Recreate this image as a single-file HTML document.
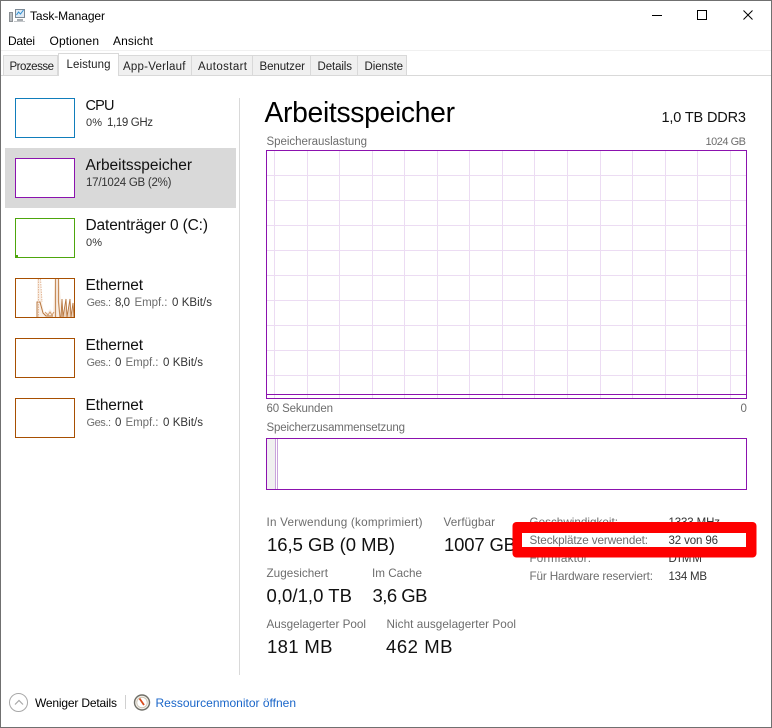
<!DOCTYPE html>
<html lang="de">
<head>
<meta charset="utf-8">
<title>Task-Manager</title>
<style>
html,body{margin:0;padding:0;background:#fff;width:772px;height:728px;overflow:hidden}
svg{display:block}
text{font-family:"Liberation Sans",Arial,sans-serif;font-size:12px;fill:#000;white-space:pre}
.t{font-size:11.5px;fill:#222}
.g{font-size:11.7px;fill:#6d6d6d}
.d{font-size:11.5px;fill:#333}
.l{font-size:11.5px;fill:#6d6d6d}
.h{font-size:15.5px;fill:#111}
.v{font-size:18.5px;fill:#111}
.c{shape-rendering:crispEdges}
</style>
</head>
<body>
<svg width="772" height="728" viewBox="0 0 772 728" xmlns="http://www.w3.org/2000/svg">
<rect width="772" height="728" fill="#fff"/>

<!-- Window frame -->
<g class="c" fill="#707070">
<rect x="0" y="0" width="772" height="1"/>
<rect x="0" y="0" width="1" height="728"/>
<rect x="771" y="0" width="1" height="728"/>
<rect x="0" y="727" width="772" height="1"/>
</g>

<!-- Title bar -->
<g>
<rect x="15.5" y="9.5" width="9" height="8" fill="#dfeaf5" stroke="#7d8a96"/>
<path d="M16.5 15l2-3 2 2 3-4" fill="none" stroke="#2f8fd0" stroke-width="1"/>
<rect x="9.5" y="12.5" width="3" height="9" fill="#b8bcc0" stroke="#8a8f93"/>
<rect x="17" y="19" width="6" height="2" fill="#a8adb1"/>
<rect x="14" y="21" width="11" height="1" fill="#c4c7ca"/>
</g>
<text x="30" y="20" textLength="75">Task-Manager</text>
<g class="c">
<rect x="652" y="15" width="10" height="1" fill="#000"/>
<rect x="697.5" y="10.5" width="9" height="9" fill="none" stroke="#000"/>
</g>
<path d="M743.5 10.5l9 9M752.5 10.5l-9 9" stroke="#000" fill="none" stroke-width="1"/>

<!-- Menu -->
<text x="8" y="45" textLength="27">Datei</text>
<text x="49.5" y="45" textLength="49.5">Optionen</text>
<text x="113" y="45" textLength="40">Ansicht</text>
<rect class="c" x="1" y="50" width="770" height="1" fill="#f0f0f0"/>

<!-- Tabs -->
<g class="c">
<rect x="3.5" y="55.5" width="54" height="20" fill="#f0f0f0" stroke="#d9d9d9"/>
<rect x="118.5" y="55.5" width="73" height="20" fill="#f0f0f0" stroke="#d9d9d9"/>
<rect x="191.5" y="55.5" width="61" height="20" fill="#f0f0f0" stroke="#d9d9d9"/>
<rect x="252.5" y="55.5" width="58" height="20" fill="#f0f0f0" stroke="#d9d9d9"/>
<rect x="310.5" y="55.5" width="47" height="20" fill="#f0f0f0" stroke="#d9d9d9"/>
<rect x="357.5" y="55.5" width="49" height="20" fill="#f0f0f0" stroke="#d9d9d9"/>
<rect x="1" y="75" width="770" height="1" fill="#d9d9d9"/>
<path d="M58.5 76V53.5H118.5V76" fill="#fff" stroke="#d9d9d9"/>
<rect x="59" y="75" width="59" height="1" fill="#fff"/>
</g>
<text class="t" x="9.5" y="70" textLength="44.5">Prozesse</text>
<text class="t" x="66.5" y="68" textLength="44">Leistung</text>
<text class="t" x="123" y="70" textLength="62.5">App-Verlauf</text>
<text class="t" x="198" y="70" textLength="49">Autostart</text>
<text class="t" x="259.5" y="70" textLength="45.5">Benutzer</text>
<text class="t" x="317.5" y="70" textLength="34.5">Details</text>
<text class="t" x="364.5" y="70" textLength="38.5">Dienste</text>

<!-- Sidebar -->
<rect class="c" x="5" y="148" width="231" height="60" fill="#d9d9d9"/>
<rect class="c" x="239" y="98" width="1" height="577" fill="#d9d9d9"/>

<g class="c" fill="#fff" stroke-width="1">
<rect x="15.5" y="98.5" width="59" height="39" stroke="#117dbb"/>
<rect x="15.5" y="158.5" width="59" height="39" stroke="#8b12ae"/>
<rect x="15.5" y="218.5" width="59" height="39" stroke="#4da60c"/>
<rect x="15.5" y="278.5" width="59" height="39" stroke="#a74f01"/>
<rect x="15.5" y="338.5" width="59" height="39" stroke="#a74f01"/>
<rect x="15.5" y="398.5" width="59" height="39" stroke="#a74f01"/>
</g>
<rect class="c" x="16" y="255" width="2" height="2" fill="#4da60c"/>

<!-- Ethernet mini graph -->
<g>
<path d="M37 317V279H40L42 302L44 313L47 313L50 309L53 313L55 279H59L61 300L62 317Z" fill="#f8ebe0" opacity=".8"/>
<path d="M37 317V302H40L43 313L46 316H53" fill="none" stroke="#b8773f" stroke-width="1"/>
<path d="M38.5 279V317M40.5 279L42 302" fill="none" stroke="#e3b797" stroke-width="1" stroke-dasharray="1.5 1"/>
<path d="M45 312L48 315L50 312L52 315L54 312" fill="none" stroke="#d29c6e" stroke-width="1"/>
<path d="M55.5 279V317M58.5 279V302L60 317" fill="none" stroke="#c68c5a" stroke-width="1.2"/>
<path d="M61 317L62 299L63 317L66 299L67 317L70 299L71 317L73 303L74 317" fill="#ecd3bd" stroke="#b8773f" stroke-width=".9"/>
<rect class="c" x="15" y="317" width="60" height="1" fill="#a74f01"/>
<rect class="c" x="74" y="278" width="1" height="40" fill="#a74f01"/>
</g>

<text class="h" x="85.5" y="110" textLength="29" style="font-size:14.5px">CPU</text>
<text class="d" x="86" y="126" textLength="16" style="font-size:11px">0%</text>
<text class="d" x="107" y="126" textLength="46">1,19 GHz</text>

<text class="h" x="85.5" y="170" textLength="106.5">Arbeitsspeicher</text>
<text class="d" x="86" y="186" textLength="85.5">17/1024 GB (2%)</text>

<text class="h" x="85.5" y="230" textLength="122.5">Datenträger 0 (C:)</text>
<text class="d" x="86" y="246" textLength="16" style="font-size:11px">0%</text>

<text class="h" x="85.5" y="290" textLength="57.5">Ethernet</text>
<text class="g" x="86.5" y="306" textLength="24.5" style="font-size:11px">Ges.:</text>
<text class="d" x="115" y="306" textLength="15">8,0</text>
<text class="g" x="134.5" y="306" textLength="33" style="font-size:11.5px">Empf.:</text>
<text class="d" x="172" y="306" textLength="40">0 KBit/s</text>

<text class="h" x="85.5" y="350" textLength="57.5">Ethernet</text>
<text class="g" x="86.5" y="366" textLength="24.5" style="font-size:11px">Ges.:</text>
<text class="d" x="115" y="366" textLength="6">0</text>
<text class="g" x="125.5" y="366" textLength="33" style="font-size:11.5px">Empf.:</text>
<text class="d" x="163" y="366" textLength="40">0 KBit/s</text>

<text class="h" x="85.5" y="410" textLength="57.5">Ethernet</text>
<text class="g" x="86.5" y="426" textLength="24.5" style="font-size:11px">Ges.:</text>
<text class="d" x="115" y="426" textLength="6">0</text>
<text class="g" x="125.5" y="426" textLength="33" style="font-size:11.5px">Empf.:</text>
<text class="d" x="163" y="426" textLength="40">0 KBit/s</text>

<!-- Header -->
<text x="264.5" y="122" style="font-size:28.3px" textLength="190.5">Arbeitsspeicher</text>
<text class="h" x="661.5" y="122" textLength="84.5" style="font-size:14.5px">1,0 TB DDR3</text>
<text class="l" x="266.5" y="145" textLength="100.5">Speicherauslastung</text>
<text class="l" x="705.5" y="145" textLength="40.5" style="font-size:11px">1024 GB</text>

<!-- Main graph -->
<g class="c">
<g fill="#ecdcf3">
<rect x="274" y="151" width="1" height="247"/><rect x="307" y="151" width="1" height="247"/>
<rect x="339" y="151" width="1" height="247"/><rect x="372" y="151" width="1" height="247"/>
<rect x="404" y="151" width="1" height="247"/><rect x="437" y="151" width="1" height="247"/>
<rect x="469" y="151" width="1" height="247"/><rect x="502" y="151" width="1" height="247"/>
<rect x="534" y="151" width="1" height="247"/><rect x="567" y="151" width="1" height="247"/>
<rect x="600" y="151" width="1" height="247"/><rect x="632" y="151" width="1" height="247"/>
<rect x="665" y="151" width="1" height="247"/><rect x="697" y="151" width="1" height="247"/>
<rect x="730" y="151" width="1" height="247"/>
<rect x="267" y="175" width="479" height="1"/><rect x="267" y="200" width="479" height="1"/>
<rect x="267" y="225" width="479" height="1"/><rect x="267" y="250" width="479" height="1"/>
<rect x="267" y="275" width="479" height="1"/><rect x="267" y="300" width="479" height="1"/>
<rect x="267" y="325" width="479" height="1"/><rect x="267" y="350" width="479" height="1"/>
<rect x="267" y="375" width="479" height="1"/>
</g>
<rect x="267" y="394" width="479" height="1" fill="#8b12ae"/>
<rect x="266.5" y="150.5" width="480" height="248" fill="none" stroke="#8b12ae"/>
</g>
<text class="l" x="266.5" y="412" textLength="66.5">60 Sekunden</text>
<text class="l" x="740.5" y="412" textLength="5.5">0</text>
<text class="l" x="266.5" y="431" textLength="138.5">Speicherzusammensetzung</text>

<!-- Composition -->
<g class="c">
<rect x="267" y="439" width="8" height="50" fill="#f0f0f0"/>
<rect x="275" y="439" width="1" height="50" fill="#c9a3dc"/>
<rect x="277" y="439" width="1" height="50" fill="#c9a3dc"/>
<rect x="266.5" y="438.5" width="480" height="51" fill="none" stroke="#8b12ae"/>
</g>

<!-- Stats -->
<text class="g" x="266.5" y="526" textLength="156">In Verwendung (komprimiert)</text>
<text class="g" x="443.5" y="526" textLength="51.5">Verfügbar</text>
<text class="v" x="267" y="551" textLength="128">16,5 GB (0 MB)</text>
<text class="v" x="444" y="551" textLength="72">1007 GB</text>
<text class="g" x="266.5" y="577" textLength="61.5">Zugesichert</text>
<text class="g" x="372" y="577" textLength="50">Im Cache</text>
<text class="v" x="266.5" y="602" textLength="85.5">0,0/1,0 TB</text>
<text class="v" x="372.5" y="602" textLength="55">3,6 GB</text>
<text class="g" x="266.5" y="628" textLength="99.5">Ausgelagerter Pool</text>
<text class="g" x="386.5" y="628" textLength="129.5">Nicht ausgelagerter Pool</text>
<text class="v" x="267" y="653" textLength="65.5">181 MB</text>
<text class="v" x="386" y="653" textLength="66.5">462 MB</text>

<text class="g" x="529.5" y="526" textLength="88.5">Geschwindigkeit:</text>
<text x="668.5" y="526" textLength="51.5" class="d">1333 MHz</text>
<text class="g" x="529.5" y="562" textLength="61.5">Formfaktor:</text>
<text x="668.5" y="562" textLength="33.5" class="d">DIMM</text>
<text class="g" x="529.5" y="580" textLength="123.5">Für Hardware reserviert:</text>
<text x="668.5" y="580" textLength="38.5" class="d">134 MB</text>

<!-- Red annotation -->
<rect x="512.5" y="522" width="244" height="35.5" rx="4" ry="4" fill="#fe0000"/>
<rect class="c" x="522" y="533" width="224" height="14" fill="#fff"/>
<text class="g" x="529.5" y="544" textLength="118.5">Steckplätze verwendet:</text>
<text x="668.5" y="544" textLength="49.5" class="d">32 von 96</text>

<!-- Footer -->
<circle cx="18.5" cy="702.5" r="9" fill="#fff" stroke="#a8a8a8" stroke-width="1"/>
<path d="M15 704.5l4-4 4 4" fill="none" stroke="#a8a8a8" stroke-width="1.2"/>
<text x="35" y="707" textLength="82">Weniger Details</text>
<rect class="c" x="125" y="695" width="1" height="14" fill="#d0d0d0"/>
<circle cx="142" cy="702.5" r="7.5" fill="#f3efe8" stroke="#6f6f68" stroke-width="1.4"/>
<circle cx="142" cy="702.5" r="5.2" fill="#fff" stroke="#c9c2b2" stroke-width=".8"/>
<path d="M139.5 698.5l4.5 6.5" stroke="#d84a1b" stroke-width="1.8" fill="none"/>
<text x="155.5" y="707" textLength="140.5" style="fill:#1a66c9">Ressourcenmonitor öffnen</text>
</svg>
</body>
</html>
